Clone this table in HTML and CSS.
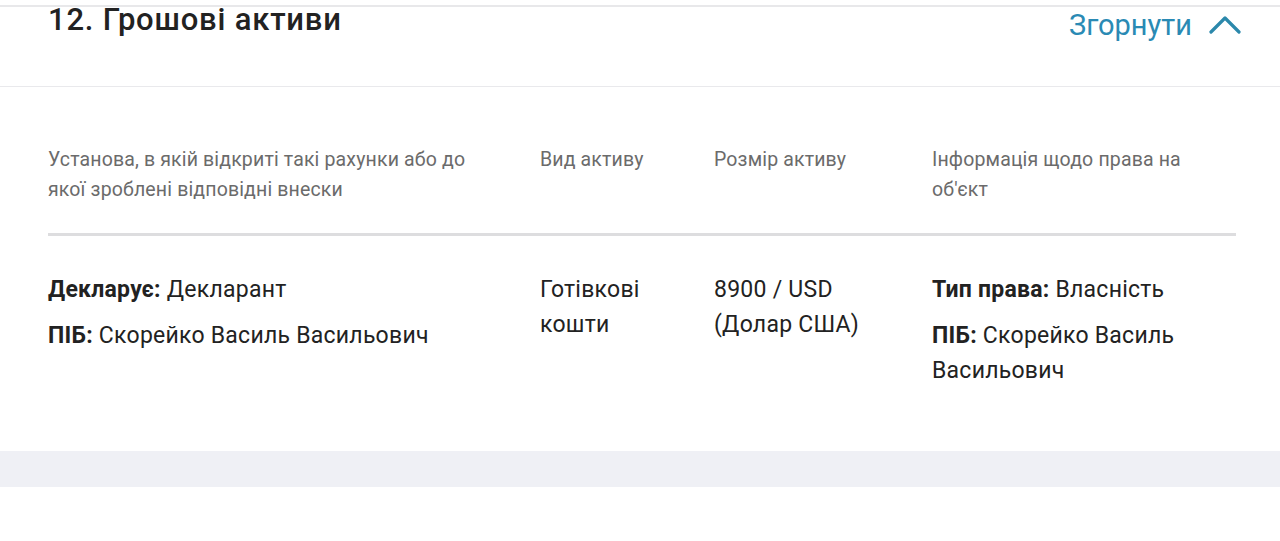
FILE: index.html
```html
<!DOCTYPE html>
<html lang="uk">
<head>
<meta charset="utf-8">
<title>Грошові активи</title>
<link rel="stylesheet" href="styles.css">
</head>
<body>
<section class="card">
  <header class="card-head">
    <h2 class="card-title">12. Грошові активи</h2>
    <a class="toggle" href="#">
      <span class="toggle-text">Згорнути</span>
      <svg class="chevron" width="32" height="20" viewBox="0 0 32 20" aria-hidden="true">
        <polyline points="2,18 16,4 30,18" fill="none" stroke="#2b88ab" stroke-width="3.2" stroke-linecap="round" stroke-linejoin="round"/>
      </svg>
    </a>
  </header>
  <div class="table">
    <div class="row head-row">
      <div class="cell">Установа, в якій відкриті такі рахунки або до якої зроблені відповідні внески</div>
      <div class="cell">Вид активу</div>
      <div class="cell">Розмір активу</div>
      <div class="cell">Інформація щодо права на об'єкт</div>
    </div>
    <div class="row body-row">
      <div class="cell">
        <p><b>Декларує:</b> Декларант</p>
        <p><b>ПІБ:</b> Скорейко Василь Васильович</p>
      </div>
      <div class="cell"><p>Готівкові кошти</p></div>
      <div class="cell"><p>8900 / USD (Долар США)</p></div>
      <div class="cell">
        <p><b>Тип права:</b> Власність</p>
        <p><b>ПІБ:</b> Скорейко Василь Васильович</p>
      </div>
    </div>
  </div>
</section>
<div class="band"></div>
</body>
</html>
```

FILE: styles.css
```css
html, body {
  margin: 0;
  padding: 0;
  background: #ffffff;
  font-family: Roboto, "Noto Sans", sans-serif;
}

.card {
  margin-top: 5px;
  border-top: 2px solid #e8e8ea;
}

.card-head {
  height: 80px;
  box-sizing: border-box;
  border-bottom: 1px solid #e9e9ec;
  display: flex;
  justify-content: space-between;
  align-items: flex-start;
  padding: 0 39px 0 48px;
}

.card-title {
  margin: 0;
  font-size: 31px;
  line-height: 26px;
  font-weight: 500;
  letter-spacing: 0.8px;
  color: #222222;
}

.toggle {
  display: flex;
  align-items: center;
  gap: 17px;
  text-decoration: none;
  color: #2a8ab4;
  margin-top: 3px;
}

.toggle-text {
  font-size: 29px;
  line-height: 30px;
}

.chevron {
  display: block;
  margin-top: -3px;
}

.table {
  padding: 0 44px 52px 48px;
}

.row {
  display: grid;
  grid-template-columns: 492px 174px 218px 1fr;
}

.head-row {
  padding: 58px 0 28px;
  border-bottom: 3px solid #dddddf;
  font-size: 19.5px;
  line-height: 30px;
  letter-spacing: 0.15px;
  color: #6b6b6b;
}

.head-row .cell {
  padding-right: 40px;
}

.body-row {
  padding-top: 36px;
  font-size: 23px;
  line-height: 35px;
  letter-spacing: 0.25px;
  color: #222222;
}

.body-row .cell {
  padding-right: 40px;
}

.body-row p {
  margin: 0 0 11px;
}

.body-row b {
  font-weight: 700;
}

.band {
  height: 36px;
  background: #eff0f5;
}
```
